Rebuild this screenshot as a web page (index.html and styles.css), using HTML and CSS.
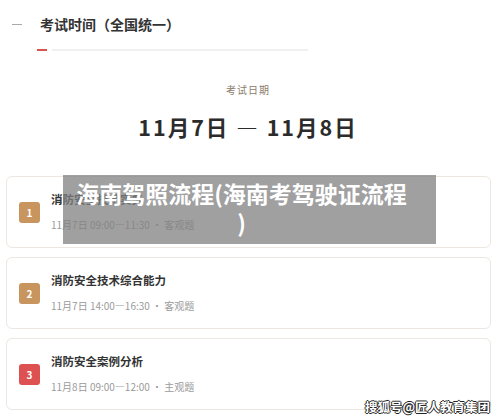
FILE: index.html
```html
<!DOCTYPE html>
<html lang="zh-CN">
<head>
    <meta charset="UTF-8">
    <meta name="viewport" content="width=device-width, initial-scale=1.0">
    <title>考试时间</title>
    <link rel="stylesheet" href="styles.css">
</head>
<body>

<div class="section-head">
    <span class="head-dash"></span>
    <h2 class="head-title">考试时间（全国统一）</h2>
</div>
<div class="head-rule">
    <span class="rule-red"></span>
    <span class="rule-grey"></span>
</div>

<div class="date-box">
    <div class="date-label">考试日期</div>
    <div class="date-range">11月7日 — 11月8日</div>
</div>

<div class="exam-list">
    <div class="exam-card">
        <span class="badge badge-tan">1</span>
        <div class="exam-info">
            <div class="exam-name">消防安全技术实务</div>
            <div class="exam-meta">11月7日 09:00—11:30 · 客观题</div>
        </div>
    </div>
    <div class="exam-card">
        <span class="badge badge-tan">2</span>
        <div class="exam-info">
            <div class="exam-name">消防安全技术综合能力</div>
            <div class="exam-meta">11月7日 14:00—16:30 · 客观题</div>
        </div>
    </div>
    <div class="exam-card">
        <span class="badge badge-red">3</span>
        <div class="exam-info">
            <div class="exam-name">消防安全案例分析</div>
            <div class="exam-meta">11月8日 09:00—12:00 · 主观题</div>
        </div>
    </div>
</div>

<div class="caption">海南驾照流程(海南考驾驶证流程)</div>
<div class="watermark">搜狐号@匠人教育集团</div>

</body>
</html>
```

FILE: styles.css
```css
body {
    margin: 0;
    padding: 0;
    background-color: #ffffff;
    font-family: "Noto Sans CJK SC", "Noto Sans", sans-serif;
    color: #333333;
    position: relative;
    height: 419px;
    overflow: hidden;
}

.section-head {
    display: flex;
    align-items: center;
    padding: 14px 0 0 12px;
    gap: 18px;
}

.head-dash {
    width: 10px;
    height: 1px;
    background-color: #aaaaaa;
}

.head-title {
    margin: 0;
    font-size: 14px;
    line-height: 20px;
    font-weight: bold;
    color: #333333;
}

.head-rule {
    display: flex;
    align-items: center;
    gap: 5px;
    margin-top: 15px;
    padding-left: 37px;
}

.rule-red {
    width: 10px;
    height: 2px;
    background-color: #d9534f;
}

.rule-grey {
    width: 256px;
    height: 2px;
    background-color: #f0f0f0;
}

.date-box {
    text-align: center;
    padding-top: 32px;
    padding-right: 4px;
}

.date-label {
    font-size: 10px;
    line-height: 14px;
    letter-spacing: 1px;
    color: #8c7b6b;
}

.date-range {
    margin-top: 16px;
    font-size: 21.5px;
    line-height: 28px;
    font-weight: bold;
    letter-spacing: 2px;
    color: #2b2b2b;
}

.exam-list {
    display: flex;
    flex-direction: column;
    gap: 9px;
    margin: 35px 9px 0 6px;
}

.exam-card {
    display: flex;
    align-items: center;
    gap: 11px;
    height: 72px;
    box-sizing: border-box;
    padding: 0 12px;
    border: 1px solid #ece7e1;
    border-radius: 6px;
}

.badge {
    width: 21px;
    height: 21px;
    border-radius: 3px;
    color: #ffffff;
    font-size: 10px;
    font-weight: bold;
    line-height: 21px;
    text-align: center;
}

.badge-tan {
    background-color: #c9955e;
}

.badge-red {
    background-color: #de5151;
}

.exam-name {
    font-size: 11.5px;
    line-height: 16px;
    font-weight: bold;
    color: #333333;
}

.exam-meta {
    margin-top: 10px;
    font-size: 10px;
    line-height: 16px;
    color: #9a9a9a;
}

/* overlays on top of the screenshot */
.caption {
    position: absolute;
    left: 63px;
    top: 175px;
    width: 373px;
    height: 69px;
    box-sizing: border-box;
    padding: 4px 27px 0 11px;
    background-color: rgba(128, 128, 128, 0.75);
    color: #ffffff;
    font-size: 23px;
    line-height: 29px;
    font-weight: bold;
    text-align: center;
    line-break: anywhere;
}

.watermark {
    position: absolute;
    right: 10px;
    bottom: 4px;
    font-size: 12.5px;
    font-weight: bold;
    line-height: 16px;
    color: #ffffff;
    text-shadow: -1px 0 #222, 1px 0 #222, 0 -1px #222, 0 1px #222;
}
```
